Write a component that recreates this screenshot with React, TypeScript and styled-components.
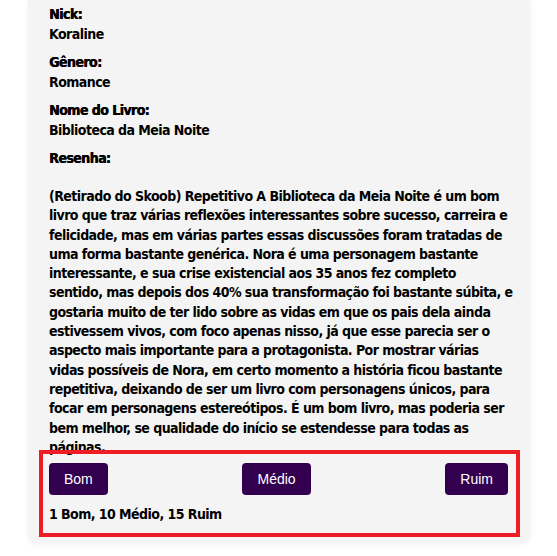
import React from "react";
import styled, { createGlobalStyle } from "styled-components";

const Global = createGlobalStyle`
  html, body { margin: 0; padding: 0; background: #ffffff; }
  body { font-family: "DejaVu Sans Condensed", "DejaVu Sans", sans-serif; }
`;

const Page = styled.div`
  width: 557px;
  height: 556px;
  overflow: hidden;
  display: flex;
  justify-content: flex-start;
  padding-left: 28px;
  box-sizing: border-box;
`;

const Card = styled.div`
  width: 502px;
  height: 542px;
  box-sizing: border-box;
  background: #f4f4f4;
  border-radius: 0 0 8px 8px;
  box-shadow: 0 2px 6px rgba(0, 0, 0, 0.06);
  padding: 4px 21px 0 21px;
  display: flex;
  flex-direction: column;
  color: #000;
  font-size: 14px;
  font-weight: 700;
  letter-spacing: -0.55px;
`;

const Field = styled.div`
  display: flex;
  flex-direction: column;
  margin-bottom: 8px;
`;

const Label = styled.div`
  line-height: 20px;
  text-shadow: 0.5px 0 0 #000;
`;

const Value = styled.div`
  line-height: 20px;
`;

const Review = styled.p`
  margin: 19px 0 0 0;
  line-height: 19.3px;
  white-space: nowrap;
`;

const Footer = styled.div`
  position: relative;
  z-index: 1;
  margin: -7px -11px 0 -10px;
  border: 4px solid #ee1c25;
  padding: 9px 8px 9px 6px;
  display: flex;
  flex-direction: column;
  gap: 10px;
`;

const Buttons = styled.div`
  display: flex;
  justify-content: space-between;
  align-items: center;
`;

const VoteButton = styled.button`
  height: 32px;
  padding: 0 15px;
  border: none;
  border-radius: 4px;
  background: #33004f;
  color: #fff;
  font-family: "Liberation Sans", Arial, sans-serif;
  font-size: 14px;
  letter-spacing: 0;
  cursor: pointer;
`;

const Counts = styled.div`
  line-height: 19px;
`;

const fields = [
  { label: "Nick:", value: "Koraline" },
  { label: "Gênero:", value: "Romance" },
  { label: "Nome do Livro:", value: "Biblioteca da Meia Noite" },
];

const reviewLines = [
  "(Retirado do Skoob) Repetitivo A Biblioteca da Meia Noite é um bom",
  "livro que traz várias reflexões interessantes sobre sucesso, carreira e",
  "felicidade, mas em várias partes essas discussões foram tratadas de",
  "uma forma bastante genérica. Nora é uma personagem bastante",
  "interessante, e sua crise existencial aos 35 anos fez completo",
  "sentido, mas depois dos 40% sua transformação foi bastante súbita, e",
  "gostaria muito de ter lido sobre as vidas em que os pais dela ainda",
  "estivessem vivos, com foco apenas nisso, já que esse parecia ser o",
  "aspecto mais importante para a protagonista. Por mostrar várias",
  "vidas possíveis de Nora, em certo momento a história ficou bastante",
  "repetitiva, deixando de ser um livro com personagens únicos, para",
  "focar em personagens estereótipos. É um bom livro, mas poderia ser",
  "bem melhor, se qualidade do início se estendesse para todas as",
  "páginas.",
];

export default function App() {
  return (
    <Page>
      <Global />
      <Card>
        {fields.map((f) => (
          <Field key={f.label}>
            <Label>{f.label}</Label>
            <Value>{f.value}</Value>
          </Field>
        ))}
        <Label>Resenha:</Label>
        <Review>
          {reviewLines.map((line, i) => (
            <React.Fragment key={i}>
              {line}
              {i < reviewLines.length - 1 && <br />}
            </React.Fragment>
          ))}
        </Review>
        <Footer>
          <Buttons>
            <VoteButton>Bom</VoteButton>
            <VoteButton>Médio</VoteButton>
            <VoteButton>Ruim</VoteButton>
          </Buttons>
          <Counts>1 Bom, 10 Médio, 15 Ruim</Counts>
        </Footer>
      </Card>
    </Page>
  );
}
